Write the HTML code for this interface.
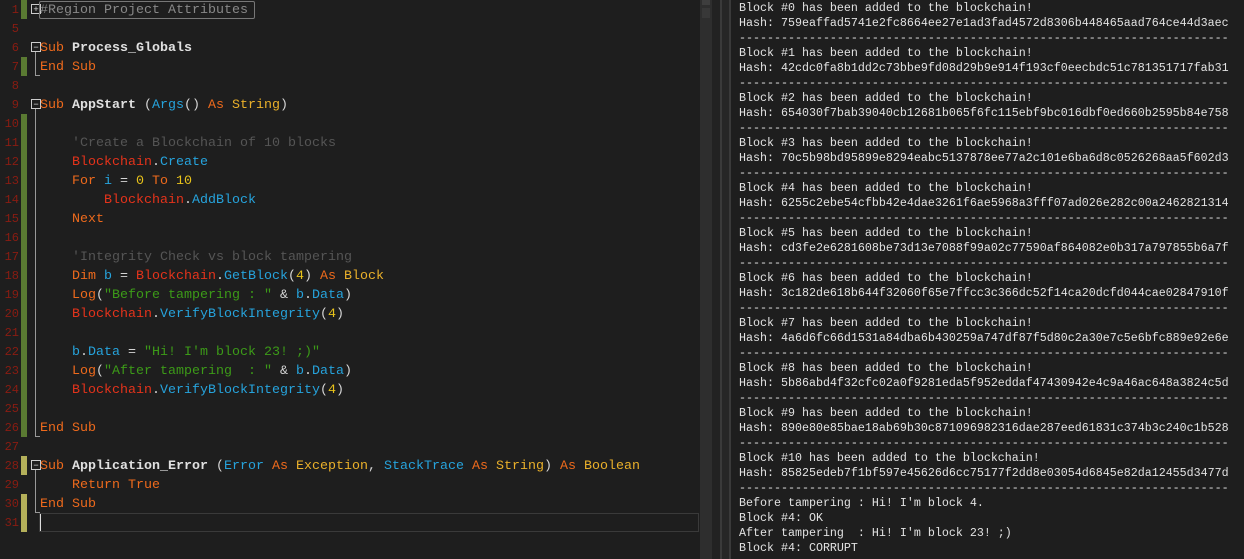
<!DOCTYPE html>
<html><head><meta charset="utf-8"><style>
body{margin:0;width:1244px;height:559px;background:#1e1e1e;overflow:hidden;position:relative;font-family:"Liberation Mono",monospace}
#ed{position:absolute;left:0;top:0;width:700px;height:559px;background:#1e1e1e}
.ln{position:absolute;left:0;width:19px;text-align:right;color:#8a1c12;font-size:12px;line-height:19px;margin-top:1px}
.bar{position:absolute;left:21px;width:6px}
.code{position:absolute;left:40px;top:1px;font-size:13.33px;line-height:19px;white-space:pre;color:#d4d4d4}
.k{color:#ee6a1c}.r{color:#e5331b}.c{color:#26a3dc}.y{color:#e8c21a}.g{color:#3c9a18}.cm{color:#555}.w{color:#e0e0e0;font-weight:bold}.t{color:#eab02a}
.box{position:absolute;left:31px;width:8px;height:8px;border:1px solid #ccc;color:#ddd;font-size:9px;line-height:8px;text-align:center;font-family:"Liberation Sans",sans-serif}
#log{position:absolute;left:739px;top:1px;font-size:11.67px;line-height:15px;white-space:pre;color:#e2e2e2}
</style></head><body>
<div id="ed">
<div class="ln" style="top:0">1</div><div class="ln" style="top:19px">5</div><div class="ln" style="top:38px">6</div><div class="ln" style="top:57px">7</div><div class="ln" style="top:76px">8</div><div class="ln" style="top:95px">9</div><div class="ln" style="top:114px">10</div><div class="ln" style="top:133px">11</div><div class="ln" style="top:152px">12</div><div class="ln" style="top:171px">13</div><div class="ln" style="top:190px">14</div><div class="ln" style="top:209px">15</div><div class="ln" style="top:228px">16</div><div class="ln" style="top:247px">17</div><div class="ln" style="top:266px">18</div><div class="ln" style="top:285px">19</div><div class="ln" style="top:304px">20</div><div class="ln" style="top:323px">21</div><div class="ln" style="top:342px">22</div><div class="ln" style="top:361px">23</div><div class="ln" style="top:380px">24</div><div class="ln" style="top:399px">25</div><div class="ln" style="top:418px">26</div><div class="ln" style="top:437px">27</div><div class="ln" style="top:456px">28</div><div class="ln" style="top:475px">29</div><div class="ln" style="top:494px">30</div><div class="ln" style="top:513px">31</div>
<div class="bar" style="top:0;height:19px;background:#5a7a32"></div>
<div class="bar" style="top:57px;height:19px;background:#5a7a32"></div>
<div class="bar" style="top:114px;height:323px;background:#5a7a32"></div>
<div class="bar" style="top:456px;height:19px;background:#b4b05a"></div>
<div class="bar" style="top:494px;height:38px;background:#b4b05a"></div>
<div class="box" style="top:4px">+</div>
<div class="box" style="top:42px">−</div>
<div class="box" style="top:99px">−</div>
<div class="box" style="top:460px">−</div>
<div style="position:absolute;left:35px;top:52px;width:4px;height:23px;border-left:1px solid #999;border-bottom:1px solid #999"></div>
<div style="position:absolute;left:35px;top:109px;width:4px;height:327px;border-left:1px solid #999;border-bottom:1px solid #999"></div>
<div style="position:absolute;left:35px;top:470px;width:4px;height:42px;border-left:1px solid #999;border-bottom:1px solid #999"></div>
<div style="position:absolute;left:39px;top:1px;width:214px;height:16px;border:1px solid #777;border-radius:2px"></div>
<div style="position:absolute;left:39px;top:513px;width:658px;height:17px;border:1px solid #3a3a3a"></div>
<div style="position:absolute;left:40px;top:514px;width:1px;height:17px;background:#ddd"></div>
<div class="code"><span style="color:#888">#Region Project Attributes</span>

<span class="k">Sub</span> <span class="w">Process_Globals</span>
<span class="k">End Sub</span>

<span class="k">Sub</span> <span class="w">AppStart</span> (<span class="c">Args</span>() <span class="k">As</span> <span class="t">String</span>)

    <span class="cm">'Create a Blockchain of 10 blocks</span>
    <span class="r">Blockchain</span>.<span class="c">Create</span>
    <span class="k">For</span> <span class="c">i</span> = <span class="y">0</span> <span class="k">To</span> <span class="y">10</span>
        <span class="r">Blockchain</span>.<span class="c">AddBlock</span>
    <span class="k">Next</span>

    <span class="cm">'Integrity Check vs block tampering</span>
    <span class="k">Dim</span> <span class="c">b</span> = <span class="r">Blockchain</span>.<span class="c">GetBlock</span>(<span class="y">4</span>) <span class="k">As</span> <span class="t">Block</span>
    <span class="k">Log</span>(<span class="g">"Before tampering : "</span> &amp; <span class="c">b</span>.<span class="c">Data</span>)
    <span class="r">Blockchain</span>.<span class="c">VerifyBlockIntegrity</span>(<span class="y">4</span>)

    <span class="c">b</span>.<span class="c">Data</span> = <span class="g">"Hi! I'm block 23! ;)"</span>
    <span class="k">Log</span>(<span class="g">"After tampering  : "</span> &amp; <span class="c">b</span>.<span class="c">Data</span>)
    <span class="r">Blockchain</span>.<span class="c">VerifyBlockIntegrity</span>(<span class="y">4</span>)

<span class="k">End Sub</span>

<span class="k">Sub</span> <span class="w">Application_Error</span> (<span class="c">Error</span> <span class="k">As</span> <span class="t">Exception</span>, <span class="c">StackTrace</span> <span class="k">As</span> <span class="t">String</span>) <span class="k">As</span> <span class="t">Boolean</span>
    <span class="k">Return</span> <span class="k">True</span>
<span class="k">End Sub</span></div>
</div>
<div style="position:absolute;left:700px;top:0;width:12px;height:559px;background:#2e2e2e"></div>
<div style="position:absolute;left:702px;top:0;width:8px;height:5px;background:#3e3e3e"></div>
<div style="position:absolute;left:702px;top:8px;width:8px;height:10px;background:#383838"></div>
<div style="position:absolute;left:712px;top:0;width:8px;height:559px;background:#222"></div>
<div style="position:absolute;left:720px;top:0;width:2px;height:559px;background:#3a3a3a"></div>
<div style="position:absolute;left:722px;top:0;width:7px;height:559px;background:#262626"></div>
<div style="position:absolute;left:729px;top:0;width:2px;height:559px;background:#3a3a3a"></div>
<div id="log">Block #0 has been added to the blockchain!
Hash: 759eaffad5741e2fc8664ee27e1ad3fad4572d8306b448465aad764ce44d3aec
----------------------------------------------------------------------
Block #1 has been added to the blockchain!
Hash: 42cdc0fa8b1dd2c73bbe9fd08d29b9e914f193cf0eecbdc51c781351717fab31
----------------------------------------------------------------------
Block #2 has been added to the blockchain!
Hash: 654030f7bab39040cb12681b065f6fc115ebf9bc016dbf0ed660b2595b84e758
----------------------------------------------------------------------
Block #3 has been added to the blockchain!
Hash: 70c5b98bd95899e8294eabc5137878ee77a2c101e6ba6d8c0526268aa5f602d3
----------------------------------------------------------------------
Block #4 has been added to the blockchain!
Hash: 6255c2ebe54cfbb42e4dae3261f6ae5968a3fff07ad026e282c00a2462821314
----------------------------------------------------------------------
Block #5 has been added to the blockchain!
Hash: cd3fe2e6281608be73d13e7088f99a02c77590af864082e0b317a797855b6a7f
----------------------------------------------------------------------
Block #6 has been added to the blockchain!
Hash: 3c182de618b644f32060f65e7ffcc3c366dc52f14ca20dcfd044cae02847910f
----------------------------------------------------------------------
Block #7 has been added to the blockchain!
Hash: 4a6d6fc66d1531a84dba6b430259a747df87f5d80c2a30e7c5e6bfc889e92e6e
----------------------------------------------------------------------
Block #8 has been added to the blockchain!
Hash: 5b86abd4f32cfc02a0f9281eda5f952eddaf47430942e4c9a46ac648a3824c5d
----------------------------------------------------------------------
Block #9 has been added to the blockchain!
Hash: 890e80e85bae18ab69b30c871096982316dae287eed61831c374b3c240c1b528
----------------------------------------------------------------------
Block #10 has been added to the blockchain!
Hash: 85825edeb7f1bf597e45626d6cc75177f2dd8e03054d6845e82da12455d3477d
----------------------------------------------------------------------
Before tampering : Hi! I'm block 4.
Block #4: OK
After tampering  : Hi! I'm block 23! ;)
Block #4: CORRUPT</div>
</body></html>
